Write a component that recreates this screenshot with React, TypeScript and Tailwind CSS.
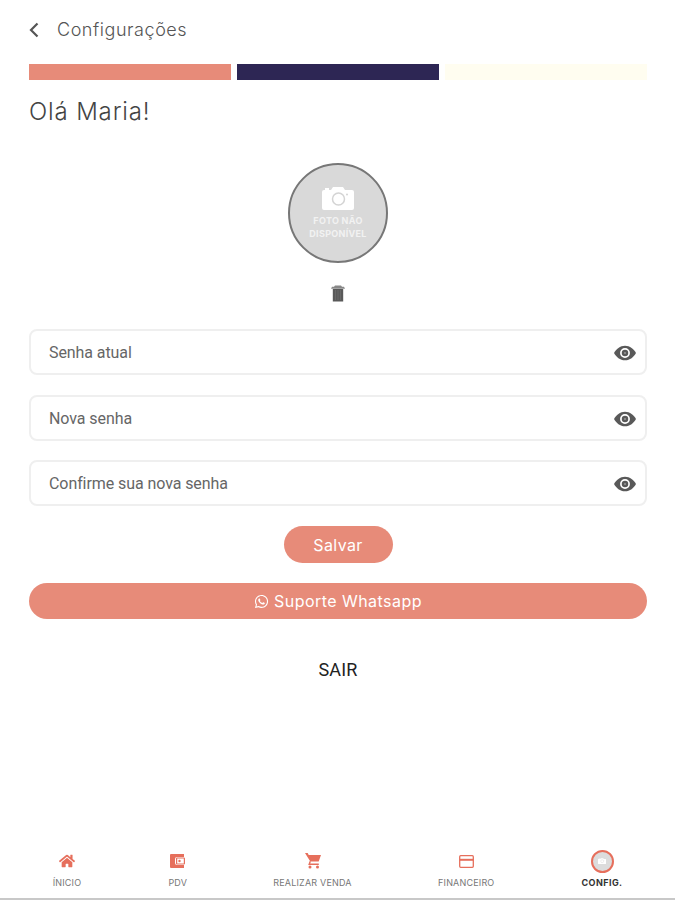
import React from "react";
import { FaHome, FaWhatsapp } from "react-icons/fa";

function CameraIcon({ className }: { className: string }) {
    return (
        <svg viewBox="0 0 32 23" className={className}>
            <path fill="#fff" d="M2 3h1V1h4v2h2l2-3h10l2 3h7a2 2 0 0 1 2 2v16a2 2 0 0 1-2 2H2a2 2 0 0 1-2-2V5a2 2 0 0 1 2-2z" />
            <circle cx="16.5" cy="12" r="6" fill="none" stroke="#d4d4d4" strokeWidth="1.5" />
            <circle cx="25" cy="7.5" r="1" fill="#d4d4d4" />
        </svg>
    );
}

function TrashIcon() {
    return (
        <svg viewBox="0 0 14 17" className="w-3.5 h-[17px]">
            <path fill="#888" d="M4 0.5h6l1 1.2h2l1 2H0l1-2h2z" />
            <path fill="#595959" d="M1.8 4h10.4v12.5H1.8z" />
            <path stroke="#6c6c6c" strokeWidth="0.8" d="M4.5 5v10M7 5v10M9.5 5v10" />
        </svg>
    );
}

function EyeIcon() {
    return (
        <svg viewBox="0 0 24 24" className="w-6 h-6 text-[#595959]">
            <path fill="currentColor" d="M1 12C3.2 8 7 4.7 12 4.7S20.800 8 23 12c-2.200 4-6 7.300-11 7.300S3.200 16 1 12z" />
            <circle cx="12" cy="12" r="4.1" fill="currentColor" stroke="#fff" strokeWidth="1.7" />
            <circle cx="12" cy="12" r="1" fill="#999" />
        </svg>
    );
}

function WalletIcon() {
    return (
        <svg viewBox="0 0 15 14" className="w-[15px] h-3.5">
            <path fill="currentColor" d="M1 0h13v3H7a2 2 0 0 0-2 2v4a2 2 0 0 0 2 2h7v3H1a1 1 0 0 1-1-1V1a1 1 0 0 1 1-1z" />
            <rect x="6.600" y="4" width="7.800" height="6" rx="0.500" fill="none" stroke="currentColor" strokeWidth="1.200" />
            <circle cx="9.500" cy="7" r="1.200" fill="currentColor" />
        </svg>
    );
}

function CartIcon() {
    return (
        <svg viewBox="0 0 16 16" className="w-4 h-4">
            <path fill="currentColor" d="M0 0h2.700l1 2H16l-2.300 6.500H5.300z" />
            <path fill="none" stroke="currentColor" strokeWidth="1.400" d="M5.300 8.300L4.200 11.200h9.600" />
            <circle cx="5" cy="14" r="1.500" fill="currentColor" />
            <circle cx="12.500" cy="14" r="1.500" fill="currentColor" />
        </svg>
    );
}

function CardIcon() {
    return (
        <svg viewBox="0 0 15 13" className="w-[15px] h-[13px]">
            <rect x="0.700" y="0.700" width="13.600" height="11.600" rx="1" fill="none" stroke="currentColor" strokeWidth="1.300" />
            <path stroke="currentColor" strokeWidth="2" d="M0.500 4.800h14" />
        </svg>
    );
}

function PasswordField({ label }: { label: string }) {
    return (
        <div className="flex items-center justify-between h-[46px] pt-0.5 pl-[18px] pr-2 border-2 border-[#efefef] rounded-lg">
            <p className="font-['Roboto',sans-serif] text-base tracking-[-0.08px] text-[#666]">{label}</p>
            <EyeIcon />
        </div>
    );
}

function NavItem({ label, width, children }: { label: string; width: string; children: React.ReactNode }) {
    return (
        <div className={`flex flex-col items-center ${width}`}>
            <div className="flex items-center justify-center h-6 text-[#e66f5c]">{children}</div>
            <p className="mt-1 text-[9px] leading-3 tracking-[0.18px] whitespace-nowrap text-[#777]">{label}</p>
        </div>
    );
}

export default function App() {
    return (
        <main className="flex flex-col h-[900px] bg-white font-['Inter',sans-serif]">
            <header className="flex items-center h-[59px] pl-[29px]">
                <svg viewBox="0 0 10 16" className="w-2.5 h-4">
                    <path d="M8.500 1.500L2 8l6.500 6.500" fill="none" stroke="#555" strokeWidth="2.200" />
                </svg>
                <h1 className="ml-[18px] text-[18px] font-light tracking-[0.55px] text-[#555]">Configurações</h1>
            </header>
            <section className="flex flex-col pl-[29px] pr-7">
                <div className="grid grid-cols-3 gap-1.5 mt-[5px] h-[15.500px]">
                    <div className="bg-[#e78b79]" />
                    <div className="bg-[#2d2654]" />
                    <div className="bg-[#fffdf0]" />
                </div>
                <h2 className="mt-[16.500px] text-2xl leading-8 font-light tracking-[0.85px] text-[#444]">Olá Maria!</h2>
                <div className="flex flex-col items-center mt-[35px]">
                    <div className="flex flex-col items-center w-[100px] h-[100px] pt-[22px] rounded-full border-2 border-[#777] bg-[#d9d9d9]">
                        <CameraIcon className="w-8 h-[23px]" />
                        <p className="mt-1 text-[9px] leading-[13px] font-bold tracking-[0.300px] text-center text-[#f2f2f2] whitespace-nowrap">
                            FOTO NÃO<br />DISPONÍVEL
                        </p>
                    </div>
                    <button className="mt-[22px]"><TrashIcon /></button>
                </div>
                <div className="flex flex-col gap-[19.500px] mt-[27px]">
                    <PasswordField label="Senha atual" />
                    <PasswordField label="Nova senha" />
                    <PasswordField label="Confirme sua nova senha" />
                </div>
                <button className="self-center mt-5 w-[109px] h-[37px] rounded-full bg-[#e78b79] text-base tracking-[0.400px] text-white">Salvar</button>
                <button className="flex items-center justify-center gap-[5px] mt-5 h-9 rounded-full bg-[#e78b79] text-base tracking-[0.450px] text-white">
                    <FaWhatsapp className="w-[15px] h-[15px]" />
                    Suporte Whatsapp
                </button>
                <button className="self-center mt-[39px] font-['Roboto',sans-serif] text-lg leading-6 tracking-[0.200px] text-[#222]">SAIR</button>
            </section>
            <nav className="flex justify-between mt-auto h-[51px] px-[52px] border-b-2 border-[#c8c8c8]">
                <NavItem label="ÍNICIO" width="w-[30px]"><FaHome className="w-4 h-4" /></NavItem>
                <NavItem label="PDV" width="w-5"><WalletIcon /></NavItem>
                <NavItem label="REALIZAR VENDA" width="w-[78px]"><CartIcon /></NavItem>
                <NavItem label="FINANCEIRO" width="w-[58px]"><CardIcon /></NavItem>
                <div className="flex flex-col items-center w-[42px]">
                    <div className="flex items-center justify-center w-[23px] h-[23px] mt-[0.500px] rounded-full border-2 border-[#e66f5c] bg-[#dcdcdc]">
                        <CameraIcon className="w-2 h-1.5" />
                    </div>
                    <p className="mt-[4.500px] text-[9px] leading-3 font-bold tracking-[0.450px] text-[#333]">CONFIG.</p>
                </div>
            </nav>
        </main>
    );
}
